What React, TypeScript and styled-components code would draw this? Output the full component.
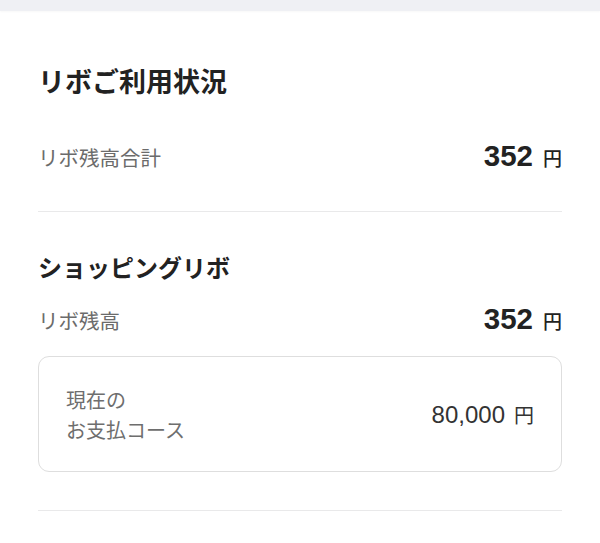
import React from "react";
import styled, { createGlobalStyle } from "styled-components";

const Global = createGlobalStyle`
  html, body { margin: 0; padding: 0; background: #ffffff; }
  body { font-family: "Noto Sans CJK JP", "Noto Sans", sans-serif; color: #222; }
`;

const Page = styled.div`
  width: 600px;
  min-height: 543px;
  background: #fff;
`;

const TopBand = styled.div`
  height: 11px;
  background: #eff0f4;
  box-shadow: 0 1px 2px rgba(0, 0, 0, 0.03);
`;

const Content = styled.div`
  padding: 0 38px;
  display: flex;
  flex-direction: column;
`;

const Section = styled.section<{ $top: number }>`
  padding-top: ${(p) => p.$top}px;
  display: flex;
  flex-direction: column;
`;

const Title = styled.h2<{ $size: number }>`
  margin: 0;
  font-size: ${(p) => p.$size}px;
  line-height: 36px;
  font-weight: 700;
  color: #222;
  letter-spacing: 0;
`;

const Row = styled.div<{ $gap: number }>`
  margin-top: ${(p) => p.$gap}px;
  display: flex;
  align-items: center;
  justify-content: space-between;
  height: 36px;
`;

const Label = styled.span`
  font-size: 20.5px;
  color: #6b6b6b;
  line-height: 36px;
`;

const Amount = styled.span`
  font-family: "Liberation Sans", "Noto Sans CJK JP", sans-serif;
  font-weight: 700;
  font-size: 29.5px;
  color: #222;
  line-height: 36px;
  display: flex;
  align-items: baseline;
  gap: 10px;
`;

const Yen = styled.span<{ $size: number; $weight: number }>`
  font-family: "Noto Sans CJK JP", sans-serif;
  font-size: ${(p) => p.$size}px;
  font-weight: ${(p) => p.$weight};
`;

const Divider = styled.hr<{ $top: number }>`
  margin: ${(p) => p.$top}px 0 0;
  border: none;
  border-top: 1px solid #e9e9ea;
  height: 0;
`;

const CourseBox = styled.div`
  margin-top: 18px;
  height: 116px;
  box-sizing: border-box;
  border: 1.5px solid #dedede;
  border-radius: 11px;
  display: flex;
  align-items: center;
  justify-content: space-between;
  padding: 0 27px 0 27px;
`;

const CourseLabel = styled.div`
  font-size: 20px;
  line-height: 30px;
  color: #6e6e6e;
  padding-top: 2px;
`;

const CourseAmount = styled.span`
  font-family: "Liberation Sans", "Noto Sans CJK JP", sans-serif;
  font-size: 24px;
  color: #333;
  display: flex;
  align-items: baseline;
  gap: 9px;
`;

export default function App() {
  return (
    <Page>
      <Global />
      <TopBand />
      <Content>
        <Section $top={52}>
          <Title $size={27}>リボご利用状況</Title>
          <Row $gap={40}>
            <Label>リボ残高合計</Label>
            <Amount>
              352<Yen $size={19} $weight={500}>円</Yen>
            </Amount>
          </Row>
          <Divider $top={36} />
        </Section>
        <Section $top={37}>
          <Title $size={24}>ショッピングリボ</Title>
          <Row $gap={17}>
            <Label>リボ残高</Label>
            <Amount>
              352<Yen $size={19} $weight={500}>円</Yen>
            </Amount>
          </Row>
          <CourseBox>
            <CourseLabel>
              現在の
              <br />
              お支払コース
            </CourseLabel>
            <CourseAmount>
              80,000<Yen $size={20} $weight={400}>円</Yen>
            </CourseAmount>
          </CourseBox>
          <Divider $top={38} />
        </Section>
      </Content>
    </Page>
  );
}
